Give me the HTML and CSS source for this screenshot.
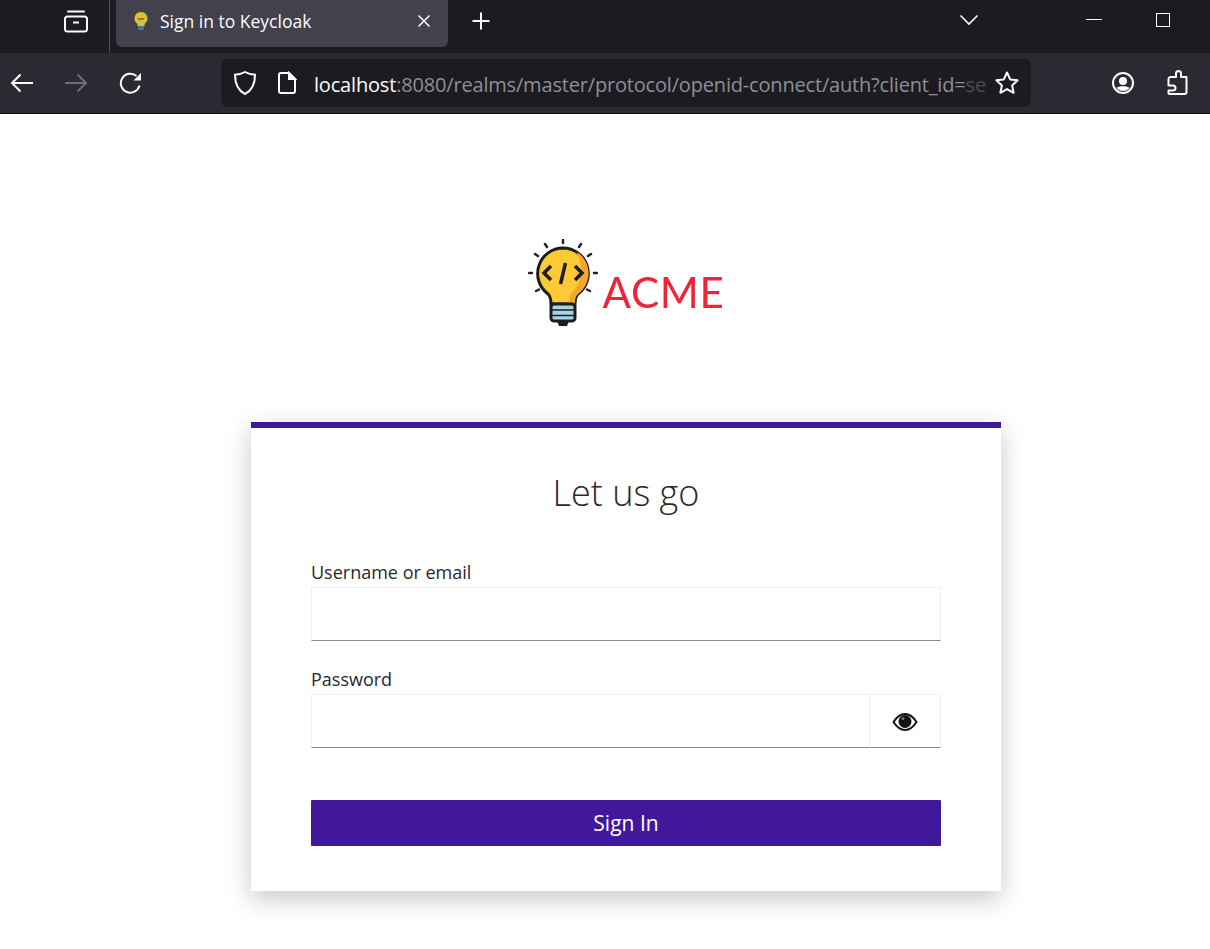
FILE: index.html
```html
<!DOCTYPE html>
<html lang="en">
<head>
  <meta charset="UTF-8" />
  <title>Sign in to Keycloak</title>
  <link rel="stylesheet" href="styles.css">
</head>
<body>
  <!-- Browser tabs -->
  <div class="tabbar">
    <div class="tab-side">
      <svg class="icon-view" width="26" height="24" viewBox="0 0 26 24" fill="none" stroke="#fbfbfe" stroke-width="2">
        <rect x="2" y="7.5" width="22" height="15" rx="2.5"/>
        <path d="M5 2.5h16" stroke-linecap="round"/>
        <path d="M10 13.5h6"/>
      </svg>
    </div>
    <div class="tab">
      <svg class="favicon" width="16" height="20" viewBox="0 0 16 20">
        <path d="M8 1a6.500 6.500 0 0 0-3.600 11.900V15h7.200v-2.100A6.500 6.500 0 0 0 8 1z" fill="#d9bf3a"/>
        <path d="M5 8h6" stroke="#8a7a2a" stroke-width="2"/>
        <rect x="5" y="15" width="6" height="4" rx="1" fill="#3f7f93"/>
      </svg>
      <span class="tab-title">Sign in to Keycloak</span>
      <svg class="tab-close" width="14" height="14" viewBox="0 0 14 14" stroke="#fbfbfe" stroke-width="1.5">
        <path d="M1.500 1.500l11 11M12.500 1.500l-11 11"/>
      </svg>
    </div>
    <svg class="new-tab" width="20" height="20" viewBox="0 0 20 20" stroke="#fbfbfe" stroke-width="2">
      <path d="M10 1.500v17M1.500 10h17"/>
    </svg>
    <svg class="tab-list" width="20" height="12" viewBox="0 0 20 12" fill="none" stroke="#fbfbfe" stroke-width="1.6">
      <path d="M1.500 1.500L10 10l8.500-8.500"/>
    </svg>
    <div class="win-min"></div>
    <div class="win-max"></div>
  </div>

  <!-- Browser toolbar -->
  <div class="toolbar">
    <svg class="tb-back" width="24" height="20" viewBox="0 0 24 20" fill="none" stroke="#fbfbfe" stroke-width="2">
      <path d="M23 10H2M10.500 1.500L2 10l8.500 8.500"/>
    </svg>
    <svg class="tb-forward" width="24" height="20" viewBox="0 0 24 20" fill="none" stroke="#6f6e75" stroke-width="2">
      <path d="M1 10h21M13.500 1.500L22 10l-8.500 8.500"/>
    </svg>
    <svg class="tb-reload" width="24" height="24" viewBox="0 0 24 24" fill="none" stroke="#fbfbfe" stroke-width="2">
      <path d="M20.500 14.500A9.500 9.500 0 1 1 17.500 5"/>
      <path d="M22 2v7.500h-7.500z" fill="#fbfbfe" stroke="none"/>
    </svg>
    <div class="urlbar">
      <svg class="url-shield" width="24" height="26" viewBox="0 0 24 26" fill="none" stroke="#fbfbfe" stroke-width="2">
        <path d="M12 2c3 1.700 6 2.600 10 2.800 0 9-2.500 15.500-10 19.200C4.500 20.300 2 13.800 2 4.800 6 4.600 9 3.700 12 2z"/>
      </svg>
      <svg class="url-page" width="20" height="24" viewBox="0 0 20 24" fill="none" stroke="#fbfbfe" stroke-width="2">
        <path d="M4 2h8l6 6v12a2 2 0 0 1-2 2H4a2 2 0 0 1-2-2V4a2 2 0 0 1 2-2z"/>
        <path d="M12 2v6h6l-6-6z" fill="#fbfbfe"/>
      </svg>
      <div class="url-text"><span class="url-host">localhost</span>:8080/realms/master/protocol/openid-connect/auth?client_id=<span class="url-fade">se</span></div>
      <svg class="url-star" width="26" height="26" viewBox="0 0 26 26" fill="none" stroke="#fbfbfe" stroke-width="2" stroke-linejoin="round">
        <path d="M13 2.500l3.200 6.900 7.400.9-5.500 5.100 1.500 7.400-6.600-3.700-6.600 3.700 1.500-7.400-5.500-5.100 7.400-.9z"/>
      </svg>
    </div>
    <svg class="tb-account" width="24" height="24" viewBox="0 0 24 24" fill="none" stroke="#fbfbfe" stroke-width="2">
      <circle cx="12" cy="12" r="10"/>
      <circle cx="12" cy="10" r="4" fill="#fbfbfe" stroke="none"/>
      <path d="M5.500 17c2-2.500 11-2.500 13 0-3 4-10 4-13 0z" fill="#fbfbfe" stroke="none"/>
    </svg>
    <svg class="tb-ext" width="24" height="26" viewBox="0 0 24 26" fill="none" stroke="#fbfbfe" stroke-width="2" stroke-linejoin="round">
      <path d="M11 7V3.500a2.500 2.500 0 0 1 5 0V7h5.500v15a2 2 0 0 1-2 2H4.500a1 1 0 0 1-1-1v-2.500H8a2.500 2.500 0 0 0 0-5H3.500V9a2 2 0 0 1 2-2z"/>
    </svg>
  </div>

  <!-- Login page -->
  <main class="page">
    <div class="logo">
      <svg class="logo-bulb" width="70" height="88" viewBox="0 0 70 88">
        <g stroke="#222" stroke-width="2.500" stroke-linecap="round">
          <path d="M35 1v3M17 5l2 3M53 5l-2 3M7 15l3 2M63 15l-3 2M1 34h3M69 34h-3M8 52l3-1.500M62 52l-3-1.500"/>
        </g>
        <path d="M35 9a25.500 25.500 0 0 0-15 46c3 3 3 6 3 10h24c0-4 0-7 3-10A25.500 25.500 0 0 0 35 9z" fill="#fdc934" stroke="#1d1d1b" stroke-width="3"/>
        <path d="M49 13a25.500 25.500 0 0 1 1 42c-3 3-3 6-3 10h-6c0-6 1-10 5-14 8-8 9-26 3-38z" fill="#f2a82a"/>
        <g fill="none" stroke="#1d1d1b" stroke-width="3.500">
          <path d="M23 27l-7 7 7 7M47 27l7 7-7 7M37.500 24l-5 21"/>
        </g>
        <rect x="23" y="65" width="24" height="17" rx="3" fill="#a5d4e8" stroke="#1d1d1b" stroke-width="3"/>
        <path d="M24 71h22M24 76.500h22" stroke="#1d1d1b" stroke-width="1.500"/>
        <path d="M29 82h12l-2 5h-8z" fill="#1d1d1b"/>
      </svg>
      <span class="logo-text">ACME</span>
    </div>

    <div class="card">
      <h1>Let us go</h1>
      <form>
        <label for="username">Username or email</label>
        <input id="username" class="field" type="text" />

        <label for="password" class="label-pass">Password</label>
        <div class="pass-group">
          <input id="password" class="field" type="password" />
          <div class="eye-btn">
            <svg width="26" height="18" viewBox="0 0 26 18">
              <path d="M1.500 9C5 3.500 9 1 13 1s8 2.500 11.500 8C21 14.500 17 17 13 17S5 14.500 1.500 9z" fill="#fff" stroke="#111" stroke-width="2"/>
              <circle cx="13" cy="8.500" r="6.500" fill="#111"/>
              <circle cx="11" cy="5.500" r="1.500" fill="#777"/>
            </svg>
          </div>
        </div>

        <button type="button">Sign In</button>
      </form>
    </div>
  </main>
</body>
</html>
```

FILE: styles.css
```css
* {
  box-sizing: border-box;
}

html, body {
  margin: 0;
  height: 949px;
  overflow: hidden;
}

body {
  background: #fff;
  font-family: 'Open Sans', sans-serif;
  color: #292929;
}

svg {
  display: block;
  flex: none;
}

/* tabs */
.tabbar {
  display: flex;
  align-items: flex-start;
  height: 53px;
  background: #1c1b22;
}

.tab-side {
  width: 110px;
  height: 53px;
  padding: 9px 0 0 63px;
  border-right: 1px solid #55545c;
}

.tab {
  display: flex;
  align-items: center;
  width: 332px;
  height: 47px;
  margin-left: 6px;
  padding: 0 17px;
  background: #42414d;
  border-radius: 0 0 6px 6px;
}

.favicon {
  margin: 0 11px 5px 0;
}

.tab-title {
  flex: 1;
  padding-bottom: 6px;
  color: #fbfbfe;
  font-size: 17.5px;
  white-space: nowrap;
}

.tab-close {
  margin-bottom: 6px;
}

.new-tab {
  margin: 11px 0 0 23px;
}

.tab-list {
  margin: 14px 0 0 468px;
}

.win-min {
  width: 16px;
  height: 1px;
  margin: 19px 0 0 107px;
  background: #fbfbfe;
}

.win-max {
  width: 14px;
  height: 14px;
  margin: 13px 0 0 54px;
  border: 1px solid #fbfbfe;
}

/* toolbar */
.toolbar {
  display: flex;
  align-items: center;
  height: 61px;
  padding-bottom: 1px;
  background: #2b2a33;
  border-bottom: 1px solid #0c0c0d;
}

.tb-back {
  margin-left: 10px;
}

.tb-forward {
  margin-left: 30px;
}

.tb-reload {
  margin-left: 31px;
}

.urlbar {
  display: flex;
  align-items: center;
  width: 810px;
  height: 48px;
  margin-left: 78px;
  padding: 0 11px 0 12px;
  background: #1c1b22;
  border-radius: 6px;
}

.url-page {
  margin-left: 20px;
}

.url-text {
  flex: 1;
  min-width: 0;
  margin: 0 8px 0 17px;
  padding-top: 4px;
  white-space: nowrap;
  color: #8f8f94;
  font-size: 20px;
  letter-spacing: -0.18px;
}

.url-host {
  color: #fbfbfe;
}

.url-fade {
  color: #4d4d52;
}

.tb-account {
  margin-left: 80px;
}

.tb-ext {
  margin-left: 30px;
}

/* login */
.page {
  display: flex;
  flex-direction: column;
  align-items: center;
  padding-left: 42px;
}

.logo {
  display: flex;
  align-items: flex-end;
  height: 90px;
  margin-top: 125px;
  filter: blur(0.4px);
}

.logo-bulb {
  margin: 0 5px 2px 0;
}

.logo-text {
  margin-bottom: 16px;
  color: #ee2536;
  font-family: Lato, sans-serif;
  font-size: 42px;
  letter-spacing: 0.7px;
  line-height: 1;
}

.card {
  width: 750px;
  height: 469px;
  margin-top: 93px;
  padding: 0 60px;
  background: #fff;
  border-top: 6px solid #41189b;
  box-shadow: 0 8px 24px rgba(0, 0, 0, 0.22);
}

h1 {
  margin: 40px 0 0;
  text-align: center;
  font-size: 36px;
  font-weight: 300;
  line-height: 50px;
}

form {
  margin-top: 42px;
}

label {
  display: block;
  height: 27px;
  font-size: 18px;
  line-height: 24px;
}

.label-pass {
  margin-top: 26px;
}

.field {
  display: block;
  width: 100%;
  height: 54px;
  padding: 0 10px;
  border: 1px solid #f0f0f0;
  border-bottom: 1px solid #8a8d90;
  border-radius: 0;
  outline: none;
  font-size: 16px;
}

.pass-group {
  display: flex;
}

.pass-group .field {
  flex: 1;
  border-right: none;
}

.eye-btn {
  display: flex;
  align-items: center;
  justify-content: center;
  width: 72px;
  height: 54px;
  padding-top: 2px;
  border: 1px solid #f0f0f0;
  border-bottom: 1px solid #8a8d90;
}

button {
  display: block;
  width: 100%;
  height: 46px;
  margin-top: 52px;
  background: #41189b;
  color: #fff;
  border: none;
  border-radius: 1px;
  font-family: 'Open Sans', sans-serif;
  font-size: 21px;
}
```
